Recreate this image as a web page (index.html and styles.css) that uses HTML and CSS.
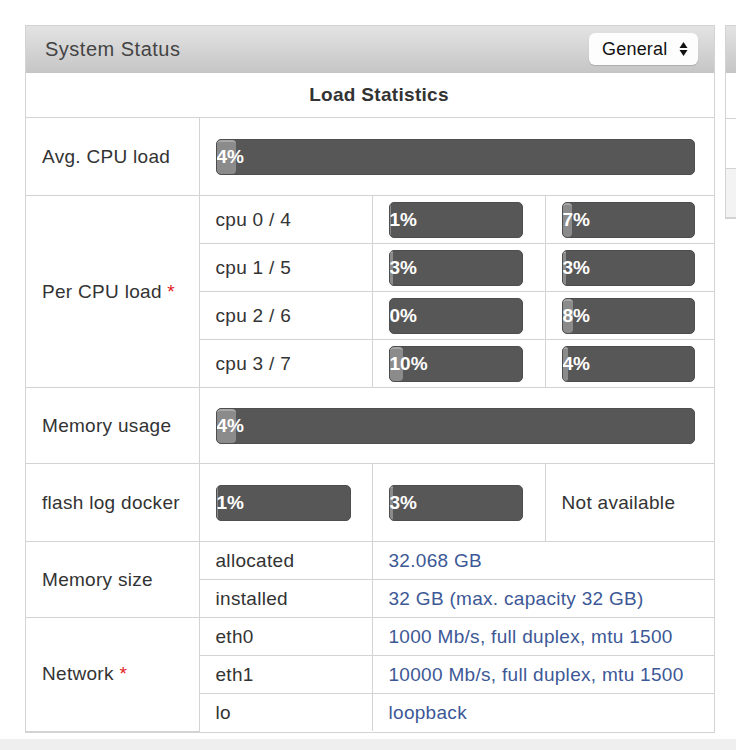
FILE: index.html
```html
<!DOCTYPE html>
<html lang="en">
  <head>
    <meta charset="UTF-8" />
    <meta name="viewport" content="width=device-width, initial-scale=1.0" />
    <title>System Status</title>
    <link rel="stylesheet" href="styles.css">
  </head>
  <body>
    <div class="page">
      <!-- System Status panel -->
      <div class="panel">
        <div class="panel-head">
          <p class="panel-title">System Status</p>
          <div class="picker">
            <span>General</span>
            <svg width="9" height="16" viewBox="0 0 9 16">
              <path d="M4.5 1 L8.5 7 L0.5 7 Z" fill="#111" />
              <path d="M4.5 15 L8.5 9 L0.5 9 Z" fill="#111" />
            </svg>
          </div>
        </div>
        <table class="stats">
          <colgroup>
            <col class="c1" /><col class="c2" /><col class="c3" /><col class="c4" />
          </colgroup>
          <tr class="r-title">
            <th colspan="4">Load Statistics</th>
          </tr>
          <tr class="r-big">
            <td>Avg. CPU load</td>
            <td colspan="3" class="bar-cell">
              <div class="bar"><div class="fill" style="width: 4%"></div><span>4%</span></div>
            </td>
          </tr>
          <tr class="r-cpu">
            <td rowspan="4">Per CPU load <span class="star">*</span></td>
            <td>cpu 0 / 4</td>
            <td class="bar-cell mid"><div class="bar"><div class="fill" style="width: 1%"></div><span>1%</span></div></td>
            <td class="bar-cell"><div class="bar"><div class="fill" style="width: 7%"></div><span>7%</span></div></td>
          </tr>
          <tr class="r-cpu">
            <td>cpu 1 / 5</td>
            <td class="bar-cell mid"><div class="bar"><div class="fill" style="width: 3%"></div><span>3%</span></div></td>
            <td class="bar-cell"><div class="bar"><div class="fill" style="width: 3%"></div><span>3%</span></div></td>
          </tr>
          <tr class="r-cpu">
            <td>cpu 2 / 6</td>
            <td class="bar-cell mid"><div class="bar"><div class="fill" style="width: 0%"></div><span>0%</span></div></td>
            <td class="bar-cell"><div class="bar"><div class="fill" style="width: 8%"></div><span>8%</span></div></td>
          </tr>
          <tr class="r-cpu">
            <td>cpu 3 / 7</td>
            <td class="bar-cell mid"><div class="bar"><div class="fill" style="width: 10%"></div><span>10%</span></div></td>
            <td class="bar-cell"><div class="bar"><div class="fill" style="width: 4%"></div><span>4%</span></div></td>
          </tr>
          <tr class="r-mem">
            <td>Memory usage</td>
            <td colspan="3" class="bar-cell">
              <div class="bar"><div class="fill" style="width: 4%"></div><span>4%</span></div>
            </td>
          </tr>
          <tr class="r-big">
            <td>flash log docker</td>
            <td class="bar-cell"><div class="bar"><div class="fill" style="width: 1%"></div><span>1%</span></div></td>
            <td class="bar-cell mid"><div class="bar"><div class="fill" style="width: 3%"></div><span>3%</span></div></td>
            <td>Not available</td>
          </tr>
          <tr class="r-small">
            <td rowspan="2">Memory size</td>
            <td>allocated</td>
            <td colspan="2" class="value">32.068 GB</td>
          </tr>
          <tr class="r-small">
            <td>installed</td>
            <td colspan="2" class="value">32 GB (max. capacity 32 GB)</td>
          </tr>
          <tr class="r-small">
            <td rowspan="3">Network <span class="star">*</span></td>
            <td>eth0</td>
            <td colspan="2" class="value">1000 Mb/s, full duplex, mtu 1500</td>
          </tr>
          <tr class="r-small">
            <td>eth1</td>
            <td colspan="2" class="value">10000 Mb/s, full duplex, mtu 1500</td>
          </tr>
          <tr class="r-small">
            <td>lo</td>
            <td colspan="2" class="value">loopback</td>
          </tr>
        </table>
      </div>

      <!-- next panel, cut off by the window -->
      <div class="panel side">
        <div class="panel-head"></div>
        <div class="side-row"></div>
        <div class="side-row tall"></div>
        <div class="side-row grey"></div>
      </div>
    </div>
    <div class="footer"></div>
  </body>
</html>
```

FILE: styles.css
```css
html, body {
  margin: 0;
  background-color: #fff;
  overflow: hidden;
  height: 750px;
}
body {
  font-family: "Liberation Sans", Arial, sans-serif;
  color: #333;
}
.page {
  display: flex;
  align-items: flex-start;
  gap: 10px;
  padding: 25px 0 6px 25px;
  width: 1100px;
}
.panel {
  border: 1px solid #d3d3d3;
  background-color: #fff;
}
.panel-head {
  display: flex;
  align-items: center;
  justify-content: space-between;
  height: 46px;
  padding: 0 16px 0 19px;
  background: linear-gradient(#e3e3e3, #c6c6c6);
  border-bottom: 1px solid #c4c4c4;
}
.panel-title {
  margin: 0;
  font-size: 20px;
  letter-spacing: 0.5px;
  color: #444;
}
.picker {
  display: flex;
  align-items: center;
  justify-content: space-between;
  width: 109px;
  height: 32px;
  box-sizing: border-box;
  padding: 0 10px 0 13px;
  background-color: #fdfdfd;
  border-radius: 6px;
  box-shadow: 0 1px 1px rgba(0, 0, 0, 0.15);
  font-size: 18px;
  letter-spacing: 0.2px;
  color: #111;
}
.stats {
  width: 688px;
  border-collapse: collapse;
  table-layout: fixed;
  font-size: 19px;
  letter-spacing: 0.3px;
}
.c1 { width: 173px; }
.c2 { width: 173px; }
.c3 { width: 173px; }
.c4 { width: 169px; }
.stats th,
.stats td {
  border: 1px solid #d3d3d3;
  padding: 0 0 0 16px;
  text-align: left;
  font-weight: normal;
  white-space: nowrap;
}
.stats tr:first-child th {
  border-top: none;
}
.stats tr td:first-child,
.stats tr th:first-child {
  border-left: none;
}
.stats tr td:last-child,
.stats tr th:last-child {
  border-right: none;
}
.stats tr:last-child td {
  border-bottom: none;
}
.stats .r-title th {
  height: 44px;
  text-align: center;
  font-weight: bold;
  padding: 0 0 0 18px;
}
.r-big td { height: 77px; }
.r-cpu td { height: 47px; }
.r-mem td { height: 75px; }
.r-small td { height: 37px; }
.stats td.bar-cell {
  padding: 0 21px 0 16px;
}
.stats td.bar-cell.mid {
  padding-right: 22px;
}
.stats tr td.bar-cell:last-child {
  padding-right: 19px;
}
.star {
  color: #e02020;
}
.value {
  color: #3d5896;
}
.bar {
  display: grid;
  align-items: center;
  height: 36px;
  box-sizing: border-box;
  background-color: #575757;
  border: 1px solid #4e4e4e;
  border-radius: 5px;
  overflow: hidden;
}
.bar .fill,
.bar span {
  grid-area: 1 / 1;
}
.bar .fill {
  height: 100%;
  background-color: #8b8b8b;
  border-top: 2px solid #a8a8a8;
  box-sizing: border-box;
  border-radius: 4px;
}
.bar span {
  color: #fff;
  font-weight: bold;
  font-size: 19px;
  letter-spacing: 0;
}
.side {
  width: 200px;
}
.side-row {
  height: 45px;
  border-bottom: 1px solid #d3d3d3;
}
.side-row.tall {
  height: 49px;
}
.side-row.grey {
  height: 48px;
  background-color: #f3f3f3;
}
.footer {
  height: 40px;
  background-color: #efefef;
}
```
